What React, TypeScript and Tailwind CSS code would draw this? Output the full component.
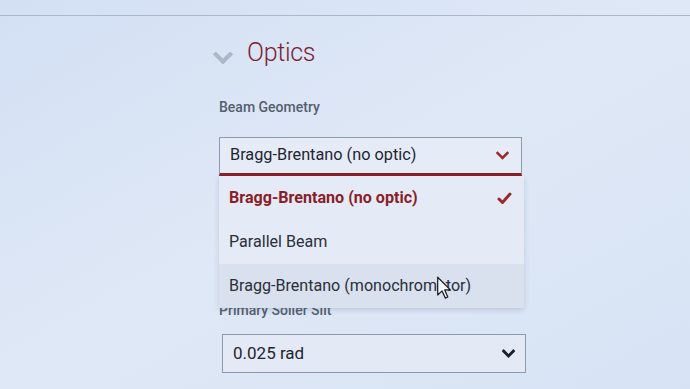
import React from 'react';

const font = { fontFamily: 'Roboto, "Liberation Sans", sans-serif' };

const ChevronDown = ({ className, strokeWidth = 3 }: { className?: string; strokeWidth?: number }) => (
  <svg className={className} viewBox="0 0 16 10" fill="none" stroke="currentColor" strokeWidth={strokeWidth} strokeLinecap="square">
    <path d="M2 2 L8 8 L14 2" />
  </svg>
);

const Cursor = () => (
  <svg className="absolute left-[217px] top-[12px] w-[16px] h-[24px]" viewBox="0 0 12 19">
    <path d="M1 1 L1 15 L4.5 11.8 L7 17.5 L9 16.6 L6.6 11 L11 11 Z" fill="#f5f7fb" stroke="#1b1f2a" strokeWidth="1" strokeLinejoin="round" />
  </svg>
);

const options = ['Bragg-Brentano (no optic)', 'Parallel Beam', 'Bragg-Brentano (monochromator)'];

export default function App() {
  return (
    <div className="w-[690px] h-[389px] overflow-hidden bg-gradient-to-br from-[#d3e0f4] via-[#dfe8f6] to-[#d7e3f5]" style={font}>
      {/* top edge of the panel */}
      <div className="h-[16px] border-b border-[#a9b8cd]" />

      <div className="pl-[213px] pt-[21px]">
        {/* section header */}
        <div className="flex items-center gap-[14px] h-[32px]">
          <ChevronDown className="w-[20px] h-[12px] mt-[10px] text-[#aeb8c6]" strokeWidth={3.5} />
          <span className="text-[25px] font-light leading-[32px] text-[#7b2232] tracking-[-0.3px]">Optics</span>
        </div>

        <div className="pl-[6px]">
          <div className="mt-[28px] text-[14px] leading-[20px] font-medium text-[#535e6e]">Beam Geometry</div>

          {/* open select */}
          <div className="relative mt-[20px] w-[303px]">
            <div className="h-[39px] flex items-center justify-between pl-[10px] pr-[12px] border border-[#8e99a9] border-b-[3px] border-b-[#8c1f26] bg-[#e5ecf7]">
              <span className="text-[16.3px] text-[#1f2430]">Bragg-Brentano (no optic)</span>
              <ChevronDown className="w-[13px] h-[9px] text-[#9a2a2e]" strokeWidth={3.2} />
            </div>

            <div className="absolute left-0 top-full z-10 w-[305px] bg-[#e5ebf6] shadow-[0_2px_5px_rgba(60,80,110,0.2)]">
              {options.map((o, i) => (
                <div
                  key={o}
                  className={`relative h-[44px] flex items-center justify-between pl-[10px] pr-[12px] text-[16.1px] ${
                    i === 0 ? 'font-bold text-[#8a1e28]' : 'text-[#2a2f3a]'
                  } ${i === 2 ? 'bg-[#d9e1ee]' : ''}`}
                >
                  <span>{o}</span>
                  {i === 0 && (
                    <svg className="w-[15px] h-[13px]" viewBox="0 0 15 13" fill="none" stroke="#9a2a2e" strokeWidth="3" strokeLinecap="round" strokeLinejoin="round">
                      <path d="M2 7 L5.5 10.5 L13 2" />
                    </svg>
                  )}
                  {i === 2 && <Cursor />}
                </div>
              ))}
            </div>
          </div>

          <div className="mt-[124px] text-[14px] leading-[20px] font-medium text-[#535e6e]">Primary Soller Slit</div>

          <div className="mt-[14px] ml-[3px] w-[304px] h-[39px] flex items-center justify-between pl-[10px] pr-[10px] border border-[#8e99a9] bg-[#e3eaf5]">
            <span className="text-[17px] text-[#1f2430]">0.025 rad</span>
            <ChevronDown className="w-[13px] h-[9px] text-[#1c202a]" strokeWidth={3.4} />
          </div>
        </div>
      </div>
    </div>
  );
}
